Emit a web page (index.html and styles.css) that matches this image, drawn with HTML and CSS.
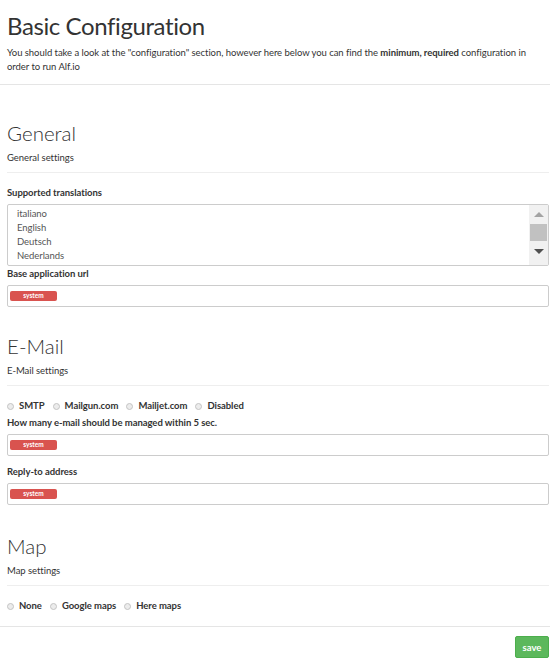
FILE: index.html
```html
<!DOCTYPE html>
<html>
<head>
<meta charset="utf-8">
<link rel="stylesheet" href="styles.css">
</head>
<body>
<div class="wrap">
  <h1 class="title">Basic Configuration</h1>
  <p class="intro">You should take a look at the "configuration" section, however here below you can find the <strong>minimum, required</strong> configuration in order to run Alf.io</p>
</div>
<hr class="rule-full">
<div class="wrap">
  <section class="section section-first">
    <h2 class="section-title">General</h2>
    <p class="section-desc">General settings</p>
    <hr class="rule">
    <label class="field-label label-first">Supported translations</label>
    <div class="listbox">
      <ul class="options">
        <li>italiano</li>
        <li>English</li>
        <li>Deutsch</li>
        <li>Nederlands</li>
      </ul>
      <div class="scrollbar">
        <span class="arrow arrow-up"></span>
        <span class="thumb"></span>
        <span class="arrow arrow-down"></span>
      </div>
    </div>
    <label class="field-label label-flush">Base application url</label>
    <div class="input"><span class="badge">system</span></div>
  </section>

  <section class="section">
    <h2 class="section-title">E-Mail</h2>
    <p class="section-desc">E-Mail settings</p>
    <hr class="rule">
    <div class="radios">
      <span class="radio"><span class="dot"></span>SMTP</span>
      <span class="radio"><span class="dot"></span>Mailgun.com</span>
      <span class="radio"><span class="dot"></span>Mailjet.com</span>
      <span class="radio"><span class="dot"></span>Disabled</span>
    </div>
    <label class="field-label label-tight">How many e-mail should be managed within 5 sec.</label>
    <div class="input"><span class="badge">system</span></div>
    <label class="field-label">Reply-to address</label>
    <div class="input"><span class="badge">system</span></div>
  </section>

  <section class="section section-map">
    <h2 class="section-title">Map</h2>
    <p class="section-desc">Map settings</p>
    <hr class="rule">
    <div class="radios">
      <span class="radio"><span class="dot"></span>None</span>
      <span class="radio"><span class="dot"></span>Google maps</span>
      <span class="radio"><span class="dot"></span>Here maps</span>
    </div>
  </section>
</div>
<hr class="rule-full rule-bottom">
<div class="wrap actions">
  <button class="btn-save">save</button>
</div>
</body>
</html>
```

FILE: styles.css
```css
* { box-sizing: border-box; }

html, body {
  margin: 0;
  padding: 0;
  background: #fff;
}

body {
  font-family: "Source Sans Pro", Lato, "Noto Sans", sans-serif;
  font-size: 9.5px;
  line-height: 14px;
  letter-spacing: -0.05px;
  color: #333;
}

.wrap {
  padding: 0 1px 0 7px;
}

.title {
  margin: 11px 0 0;
  font-size: 24px;
  line-height: 30px;
  font-weight: 400;
  letter-spacing: -0.4px;
}

.intro {
  margin: 5px 0 0;
  padding-right: 20px;
}

.intro strong { font-weight: 700; }

.rule-full {
  margin: 10px 0 0;
  border: 0;
  border-top: 1px solid #e5e5e5;
  height: 0;
}

.rule {
  margin: 7px 0 0;
  border: 0;
  border-top: 1px solid #eee;
  height: 0;
}

.section { margin-top: 27px; }
.section-first { margin-top: 36px; }
.section-map { margin-top: 29px; }

.section-title {
  margin: 0;
  font-size: 20.5px;
  line-height: 24px;
  font-weight: 300;
  letter-spacing: 0;
}

.section-desc {
  margin: 6px 0 0;
}

.field-label {
  display: block;
  margin-top: 9px;
  font-weight: 700;
}

.label-first { margin-top: 13px; }
.label-tight { margin-top: 3px; }
.label-flush { margin-top: 1px; }

.listbox {
  margin-top: 4px;
  height: 62px;
  border: 1px solid #ccc;
  border-radius: 2px;
  display: flex;
  overflow: hidden;
}

.options {
  flex: 1;
  list-style: none;
  margin: 0;
  padding: 2px 0 0 9px;
  color: #555;
}

.scrollbar {
  width: 19px;
  background: #f1f1f1;
  display: flex;
  flex-direction: column;
  align-items: center;
}

.arrow {
  width: 0;
  height: 0;
  border-left: 5px solid transparent;
  border-right: 5px solid transparent;
}

.arrow-up {
  margin-top: 7px;
  border-bottom: 5px solid #a3a3a3;
}

.arrow-down {
  margin-top: 8px;
  border-top: 5px solid #505050;
}

.thumb {
  margin-top: 7px;
  width: 17px;
  height: 17px;
  background: #c1c1c1;
}

.input {
  margin-top: 4px;
  height: 22px;
  border: 1px solid #ccc;
  border-radius: 2px;
  padding: 5px 0 0 2px;
}

.badge {
  display: block;
  width: 47px;
  height: 10px;
  border-radius: 2px;
  background: #d9534f;
  color: #fff;
  font-size: 6.5px;
  line-height: 10px;
  font-weight: 700;
  letter-spacing: 0;
  text-align: center;
}

.radios {
  margin-top: 13px;
  display: flex;
  gap: 8px;
  font-weight: 700;
}

.radio {
  display: flex;
  align-items: center;
  gap: 5px;
}

.dot {
  width: 7px;
  height: 7px;
  border-radius: 50%;
  border: 1px solid #c4c4c4;
  background: #ececec;
}

.rule-bottom { margin-top: 13px; }

.actions {
  display: flex;
  justify-content: flex-end;
  padding-top: 9px;
}

.btn-save {
  width: 34px;
  height: 22px;
  padding: 0;
  border: 1px solid #4cae4c;
  border-radius: 2px;
  background: #5cb85c;
  color: #fff;
  font-family: inherit;
  font-size: 9.5px;
  font-weight: 700;
}
```
